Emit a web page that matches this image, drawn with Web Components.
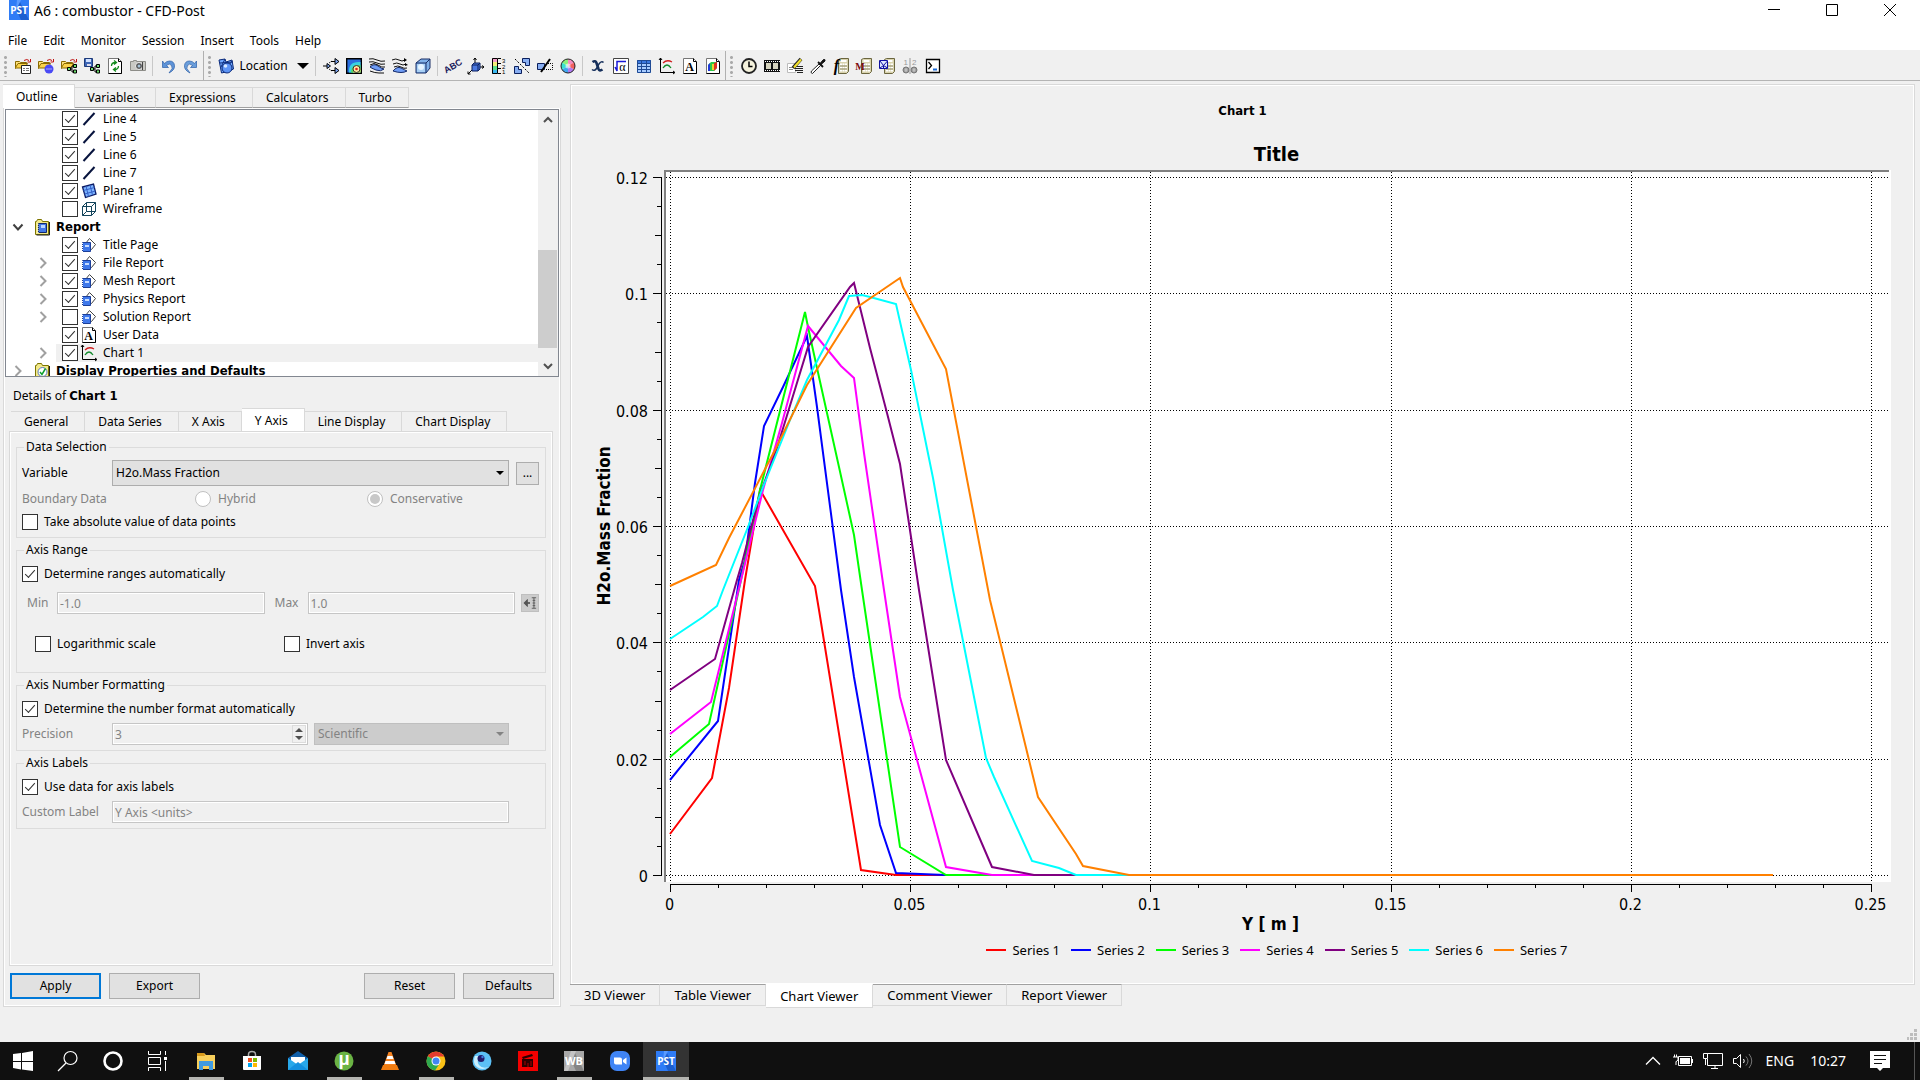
<!DOCTYPE html>
<html lang="en">
<head>
<meta charset="utf-8">
<title>A6 : combustor - CFD-Post</title>
<style>
  html, body { margin: 0; height: 100%; }
  body {
    font: 12px/18px "Noto Sans", "Open Sans", sans-serif;
    color: #000;
    background: #f0f0f0;
    --face: #f0f0f0;
    --line: #dcdcdc;
    --dark-line: #a0a0a0;
    --muted: #838383;
    --strong: 700 13px/18px "DejaVu Sans Condensed", "Noto Sans", sans-serif;
    --title-font: "Noto Sans", "Open Sans", sans-serif;
  }
</style>
</head>
<body>
<cfd-app></cfd-app>

<script>
const folder = `<path d="M.5 3.500h4l1 1h6v2h-8l-3 4z" fill="#ffe27a" stroke="#8a6a00"/><path d="M.5 9.500l2.500-4h9.500l-2.500 4.500h-9.500z" fill="#fbd34b" stroke="#8a6a00"/><path d="M9 2.500q3-2 5 0M15.500 1v3h-3" fill="none" stroke="#c01010"/>`;
const nodes = `<path d="M8 11h3M11 8v6M11 8h1M11 14h1" stroke="#000" fill="none"/><path d="M6.500 9.500h3v3h-3zM12.500 6.500h3v3h-3zM12.500 12h3v3h-3z" fill="#6ee06e" stroke="#000"/>`;
const calc = `<path d="M5.500 1.500l2-1h8v13l-2 2h-8z" fill="#d9d3ae" stroke="#6b663f"/><path d="M7.500 3h6" stroke="#fff" stroke-width="2"/><path d="M7 6.500h7M7 9.500h7M7 12.500h7" stroke="#fff" stroke-width="2" stroke-dasharray="2 .5"/><path d="M7 8h7M7 11h7" stroke="#8b8660"/>`;
const page = `<path d="M1.500 .5h10l3 3v12h-13z" fill="#fff" stroke="#777"/><path d="M11.500 .5v3h3" fill="none" stroke="#000"/><path d="M14.500 4v11.500h-13" fill="none" stroke="#000"/>`;
const axes = `<path d="M1.500 0v14.500h14M0 2l1.500-2 1.500 2M14 13l2 1.500-2 1.500" fill="none" stroke="#000"/>`;

// [viewBox size, markup]
const ICONS = {
  loadResults: [16, folder + `<path d="M6.500 7.500h9v8h-9z" fill="#fff" stroke="#222"/><path d="M8 10.500h2M11 10.500h3M8 12.500h2M11 12.500h3" stroke="#777"/>`],
  loadState: [16, folder + `<circle cx="11" cy="11" r="4.500" fill="#4a4af5"/><path d="M8.500 11h1M10.500 11h1M12.500 11h1" stroke="#fff"/>`],
  saveState: [16, folder + nodes],
  saveAs: [16, `<path d="M.5 .5h8v8h-8z" fill="#3d66b5" stroke="#1c3a7a"/><path d="M2 1h5v3h-5z" fill="#cfe0ff"/><path d="M3 6h4v2h-4z" fill="#dde"/>` + nodes],
  refresh: [16, page + `<path d="M4.500 8q0-3.500 4-3.500M7 2.500l2.500 2-2.500 2M11.500 8q0 3.500-4 3.500M9 9.500l-2.500 2 2.500 2" fill="none" stroke="#128a1c" stroke-width="1.300"/>`],
  camera: [16, `<path d="M.5 3.500h3v-1h3v1h9v9h-15z" fill="#c9c9c4" stroke="#8d8d88"/><circle cx="9" cy="8" r="3.500" fill="#555" stroke="#eee"/><circle cx="9" cy="8" r="1.500" fill="#a9c4d8"/><path d="M12.500 4v8" stroke="#444"/>`],
  undo: [16, `<path d="M2.500 3v6.500h6l-2-2q3-3 5 0t-1.500 6l-1 1.500q6-3 5.500-7.500t-5-4.500q-3 0-5 2.500z" fill="#5d93d8" stroke="#2d5fa8" stroke-width=".7"/>`],
  redo: [16, `<path d="M13.500 3v6.500h-6l2-2q-3-3-5 0t1.500 6l1 1.500q-6-3-5.500-7.500t5-4.500q3 0 5 2.500z" fill="#6a9edb" stroke="#2d5fa8" stroke-width=".7"/>`],
  location: [16, `<path d="M1 2l6-1 1 3 6-2 1.500 9-4 2-8 2z" fill="#6fa8ff" stroke="#0b2a7a"/><path d="M2 5l13-1M3 9l4-8M6 14l8-11" stroke="#0b2a7a"/><circle cx="9" cy="10" r="5" fill="#5c93f5" stroke="#0b2a7a"/><circle cx="7.500" cy="8" r="1.800" fill="#d5e7ff"/>`],
  vector: [16, `<path d="M0 8h4M8 3.500h5M8 12.500h5" stroke="#000"/><path d="M4 5.500l3.500 2.500-3.500 2.500zM12 .5l4 3-4 3zM12 9.500l4 3-4 3z" fill="#7ea6f2" stroke="#000"/><path d="M6 5l3-2M6 11l3 2" stroke="#000" stroke-dasharray="1 1"/>`],
  contour: [16, `<path d="M.7 .7h14.600v14.600h-14.600z" fill="#2a6fe0" stroke="#000" stroke-width="1.400"/><path d="M3 14.500q-1-11.500 11.500-10.500v10.500z" fill="#38d4e0"/><path d="M5 14.500q0-8.500 9.500-7.500v7.500z" fill="#58d858"/><path d="M7 14.500q0-5.500 7.500-4.500v4.500z" fill="#f4e04a"/><circle cx="10.500" cy="11" r="3.500" fill="#ffe9a0" stroke="#333"/><circle cx="10.500" cy="11" r="1.300" fill="#e02020"/>`],
  streamline: [16, `<path d="M1 9q4-4 8-1t6 3q-3 3-8 1t-6-3z" fill="#6f9df5" stroke="#142a6a"/><path d="M0 1q4-1 8 1t8 1M0 4q4-1 8 1t8 1M1 7q4-3 8 0t7 2M1 13q5 2 9 2h5" fill="none" stroke="#111"/>`],
  particle: [16, `<path d="M1 13q4-5 8-3t6 3q-5 3-14 0z" fill="#6f9df5" stroke="#142a6a"/><path d="M0 2q4-2 7 0t6 0M1 6q4-2 7 0t6 0M2 9q4-2 7 0t6 1" fill="none" stroke="#111"/><path d="M12 0l3 2-3 2zM13 5l3 2-3 1z"/>`],
  volume: [16, `<path d="M1 5l5-4h9v9l-4 5h-10z" fill="#7fb0e8" stroke="#1b2f66"/><path d="M1 5h10v10M11 5l4-4" fill="none" stroke="#1b2f66"/><path d="M2 6h8v8h-8z" fill="#a9d0f5"/><circle cx="6" cy="9" r="3" fill="#e6f4ff"/>`],
  abc: [16, `<text x="8" y="11" font-size="9" font-weight="700" font-family="Liberation Sans" text-anchor="middle" fill="#1a1a5c" transform="rotate(-30 8 8)">ABC</text>`],
  coord: [16, `<path d="M7 6v-6M5.500 2l1.500-2 1.500 2M10 9h6M14 7.500l2 1.500-2 1.500M4 12l-4 4M0 13.500v2.500h2.500" fill="none" stroke="#000"/><path d="M4 7l2-2h6v6l-2 2h-6z" fill="#4b78e0" stroke="#0b1f5c"/><path d="M4 7h6v6M10 7l2-2" fill="none" stroke="#0b1f5c"/>`],
  legend: [16, `<path d="M1 0h6v4H1z" fill="#f4a0c8"/><path d="M1 4h6v4H1z" fill="#f4f07a"/><path d="M1 8h6v4H1z" fill="#5ee08a"/><path d="M1 12h6v4H1z" fill="#3ab8f0"/><path d="M1.500 .5h5v15h-5zM7 .5h3M7 5.500h3M7 10.500h3M7 15.500h3" fill="none" stroke="#000"/><text x="11" y="5" font-size="6" font-family="Liberation Sans">3</text><text x="11" y="10.500" font-size="6" font-family="Liberation Sans">2</text><text x="11" y="16" font-size="6" font-family="Liberation Sans">1</text>`],
  instance: [16, `<path d="M8.500 .5h7v7h-4v-3h-3zM.5 8.500h4v3h3v4h-7z" fill="#88aef2" stroke="#0b1f5c"/><path d="M1 1l14 14" stroke="#000" stroke-dasharray="2 1.500"/>`],
  clip: [16, `<path d="M.5 5.500h7v6h-7z" fill="#88aef2" stroke="#0b1f5c"/><path d="M9 5.500h6.500v6h-6.500" fill="none" stroke="#000" stroke-dasharray="1 1"/><path d="M13 1l-9 13" stroke="#000" stroke-width="2"/>`],
  colorWheel: [16, `<path d="M8 8V1a7 7 0 0 1 6 3.500z" fill="#f58ac0"/><path d="M8 8l6-3.500a7 7 0 0 1 0 7z" fill="#f26060"/><path d="M8 8l6 3.500a7 7 0 0 1-6 3.500z" fill="#b07af0"/><path d="M8 8v7a7 7 0 0 1-6-3.500z" fill="#42a8f0"/><path d="M8 8l-6 3.500a7 7 0 0 1 0-7z" fill="#38e0d0"/><path d="M8 8l-6-3.500a7 7 0 0 1 6-3.500z" fill="#8af07a"/><circle cx="8" cy="8" r="2.500" fill="#fff" opacity=".6"/><circle cx="8" cy="8" r="7" fill="none" stroke="#222"/>`],
  variable: [16, `<path d="M2.500 4q3-2 4 1l2 6q1 2.500 4 .5" fill="none" stroke="#16305c" stroke-width="2.600"/><path d="M13.500 4.500q-2-2-4.500 1.500l-2.500 4.500q-2 3-4.500 1" fill="none" stroke="#16305c" stroke-width="1.500"/>`],
  expression: [16, `<path d="M.5 .5h15v15h-15z" fill="#fff" stroke="#444"/><path d="M2 9l2 4V3.500h9" fill="none" stroke="#1818d8" stroke-width="1.500"/><text x="9.500" y="13" font-size="12" font-family="Liberation Serif" text-anchor="middle">α</text>`],
  table: [16, `<path d="M1 2h14v13H1z" fill="#a8ccff"/><path d="M1 2h14v3H1z" fill="#3a78e0"/><path d="M1.500 2.500h13v12h-13zM1 5.500h14M1 8.500h14M1 11.500h14M5.500 2v13M10.500 2v13" fill="none" stroke="#1f4a94"/>`],
  chart: [16, axes + `<path d="M4 5q4-4 9-1" fill="none" stroke="#d02020" stroke-width="1.300"/><path d="M4 10q4-6 8 0" fill="none" stroke="#128a2c" stroke-width="1.300"/>`],
  text: [16, page + `<text x="7.500" y="12.500" font-size="12" font-weight="700" font-family="Liberation Serif" text-anchor="middle">A</text>`],
  figure: [16, page + `<path d="M3 7l3-3h6v6l-3 3h-6z" fill="#30c848"/><path d="M3 7l2-2v8h-2z" fill="#2038d8"/><path d="M9 5l3-1v6l-3 3z" fill="#e03020"/><path d="M7 6h2v6h-2z" fill="#e8d830"/>`],
  clock: [16, `<circle cx="8" cy="8" r="7" fill="#f5f2dc" stroke="#222" stroke-width="1.800"/><path d="M8 3.500v5h3.500" fill="none" stroke="#000" stroke-width="1.500"/>`],
  film: [16, `<path d="M0 2h16v12H0z" fill="#111"/><path d="M2 5h5v6H2zM9 5h5v6H9z" fill="#d5d3bd"/><path d="M1 3.500h15M1 12.500h15" stroke="#fff" stroke-dasharray="1 1"/>`],
  editor: [16, `<path d="M.5 5.500h8v9h-8z" fill="#fff" stroke="#bbb"/><path d="M2 9.500h4M2 11.500h4" stroke="#888"/><path d="M9 8.500h7M8 10.500h8M8 12.500h8M10 14.500h6" stroke="#222"/><path d="M14 1l-8 9" stroke="#222" stroke-width="3.500"/><path d="M14 1.500l-7 8" stroke="#f2e02a" stroke-width="2"/>`],
  probe: [16, `<path d="M9 6l1.500 1.500-8 8-1.500-1 .500-1.500z" fill="#fff" stroke="#222"/><path d="M8 4l5 5" stroke="#111" stroke-width="1.800"/><path d="M10 5.500l3.500-4q2-.5 1.500 1.500l-4 3.500z" fill="#111" stroke="#111"/>`],
  funcCalc: [16, calc + `<text x="3.500" y="13" font-size="16" font-weight="700" font-style="italic" font-family="Liberation Serif" text-anchor="middle">f</text>`],
  macroCalc: [16, calc + `<text x="4" y="11.500" font-size="10" font-weight="700" font-family="Liberation Serif" text-anchor="middle" fill="#7a0c0c">M</text>`],
  meshCalc: [16, calc + `<path d="M.5 2.500h8v8h-8z" fill="#dfe6ff" stroke="#1010a0"/><path d="M1 3l3.500 4.500 4-4.500M1 10l3.500-2.500 4 2.500M4.500 7.500v3" fill="none" stroke="#1010a0"/>`],
  compare: [16, `<g fill="none" stroke="#ccc"><circle cx="4" cy="12" r="3" fill="#999" stroke="#777"/><circle cx="12" cy="12" r="3" fill="#999" stroke="#777"/><path d="M2.500 12h3M10.500 12h3M4 10v4M12 10v4"/><path d="M8 0v16" stroke="#999"/></g><text x="1.500" y="7" font-size="8" font-family="Liberation Sans" fill="#999">1</text><text x="10" y="7" font-size="8" font-family="Liberation Sans" fill="#999">2</text>`],
  console: [16, `<path d="M1.500 1.500h13v13h-13z" fill="#fff" stroke="#000" stroke-width="1.300"/><path d="M3.500 4l3 3.500-3 3.500" fill="none" stroke="#000" stroke-width="1.300"/><path d="M8 11.500h4" stroke="#1a6ad8" stroke-width="2"/>`],

  line: [16, `<path d="M2.500 14L13.500 2" stroke="#07133d" stroke-width="2"/>`],
  plane: [16, `<path d="M1.500 4l11-3 2.500 10-10.500 3.500z" fill="#7db4ff" stroke="#0c1c66" stroke-width="1.300"/><path d="M2.500 7.500l11-3M3.500 11l11-3M5 3l2.500 10.500M9 2l2.500 10" stroke="#3561c8" fill="none"/>`],
  wire: [16, `<path d="M1.500 5.500h9v9h-9zM5.500 1.500h9v9h-9zM1.500 5.500l4-4M10.500 5.500l4-4M1.500 14.500l4-4M10.500 14.500l4-4" fill="none" stroke="#12435a"/>`],
  reportFolder: [16, `<path d="M1.500 2.500h1l1-2h4l1 2h6v13h-13z" fill="#f2e98a" stroke="#7d7400"/><path d="M4.500 4.500h8v9h-8z" fill="#4379e8" stroke="#10286e"/><path d="M7 6h4v3h-4z" fill="#b8d6ff"/><path d="M4 5v9" stroke="#fff" stroke-dasharray="1 1"/><path d="M15.500 3v13h-13" fill="none" stroke="#222"/>`],
  displayFolder: [16, `<path d="M1.500 2.500h1l1-2h4l1 2h6v13h-13z" fill="#f2e98a" stroke="#7d7400"/><circle cx="8.500" cy="9" r="4.500" fill="#fff" stroke="#5a7ac0"/><path d="M6 9l2 2.500 3.500-6" fill="none" stroke="#0ca02c" stroke-width="1.500"/><path d="M15.500 3v13" stroke="#222"/>`],
  report: [16, `<path d="M4.500 6.500l4-5 6 6-4 5z" fill="#fff" stroke="#444"/><path d="M1.500 5.500h8v9h-8z" fill="#3f78ea" stroke="#1c3f98"/><path d="M4 8h4v2H4z" fill="#c6dcff"/><path d="M1.500 6v9" stroke="#fff" stroke-dasharray="1 1"/>`],
  expand: [16, `<path d="M5.500 3l5 5-5 5" fill="none" stroke="#a0a0a0" stroke-width="2"/>`],
  collapse: [16, `<path d="M3.500 5.500l4.500 5 4.500-5" fill="none" stroke="#404040" stroke-width="2"/>`],
  up: [16, `<path d="M4 10l4-4 4 4" fill="none" stroke="#505050" stroke-width="2"/>`],
  down: [16, `<path d="M4 6l4 4 4-4" fill="none" stroke="#505050" stroke-width="2"/>`],
  range: [16, `<path d="M8 8H4" stroke="#555" stroke-width="2"/><path d="M1 8l4-4v8zM10 2h5M10 14h5" fill="#555" stroke="#555"/><path d="M12.500 2v12M11 5h3M11 8h3M11 11h3" stroke="#555"/>`],
  grip: [12, `<path d="M8 1h3v3H8zM4 5h3v3H4zM8 5h3v3H8zM1 9h2v3H1zM4 9h3v3H4zM8 9h3v3H8z" fill="#bdbdbd"/>`],

  pst: [20, `<path d="M0 0h20v20H0z" fill="#2f7cf6"/><path d="M10 0l10 20H12L7 9z" fill="#1c5fd0"/><path d="M8 0l4 0-5 10z" fill="#5b9bff"/><text x="10" y="14" font-size="10" font-weight="700" font-family="Open Sans" text-anchor="middle" fill="#fff">PST</text>`],
  wb: [20, `<path d="M0 0h20v20H0z" fill="#a8a8a8"/><path d="M10 0l10 20H12L7 9z" fill="#858585"/><path d="M7 0h5l-8 20H0z" fill="#c4c4c4"/><text x="10" y="14" font-size="11" font-weight="700" font-family="Open Sans" text-anchor="middle" fill="#fff">WB</text>`],
  minimize: [20, `<path d="M4 9.500h12" stroke="#000"/>`],
  maximize: [20, `<path d="M4.500 4.500h11v11h-11z" fill="none" stroke="#000"/>`],
  close: [20, `<path d="M4 4l12 12M16 4L4 16" stroke="#000" fill="none"/>`],

  windows: [20, `<path d="M0 3l8-1v8H0zM9 2l11-2v10H9zM0 11h8v7.500l-8-1.500zM9 11h11v9L9 18.500z" fill="#fff"/>`],
  search: [20, `<circle cx="12.500" cy="7" r="6.500" fill="none" stroke="#fff" stroke-width="1.200"/><path d="M8 12L0 20" stroke="#fff" stroke-width="1.200"/>`],
  cortana: [20, `<circle cx="10" cy="10" r="8.500" fill="none" stroke="#fff" stroke-width="2.600"/>`],
  taskView: [20, `<path d="M.5 0v3.500h12V0M.5 6.500h12v7h-12zM.5 20v-3.500h12V20M17.500 0v4M17.500 10v10" fill="none" stroke="#fff"/><path d="M16 6h3v3h-3z" fill="#fff"/>`],
  explorer: [20, `<path d="M1 2h7l2 2h9v14H1z" fill="#f7cf5c"/><path d="M1 2h7l1 3H1z" fill="#d89a1c"/><path d="M3 10h14v9h-4v-4H7v4H3z" fill="#3f9ae0"/>`],
  store: [20, `<path d="M6.500 6V3.500q0-3 3.500-3t3.500 3V6" fill="none" stroke="#aaa" stroke-width="1.500"/><path d="M1 5h18v13q0 1-1 1H2q-1 0-1-1z" fill="#fff"/><path d="M6 7h4v4H6z" fill="#f25022"/><path d="M11 7h4v4h-4z" fill="#7fba00"/><path d="M6 12h4v4H6z" fill="#00a4ef"/><path d="M11 12h4v4h-4z" fill="#ffb900"/>`],
  mail: [20, `<path d="M0 7L10 0l10 7v12H0z" fill="#0f5ea8"/><path d="M3 6h14v7H3z" fill="#fff"/><path d="M0 7l10 7 10-7v12H0z" fill="#28a8ea"/><path d="M0 19l10-8 10 8z" fill="#1490df"/>`],
  utorrent: [20, `<circle cx="10" cy="10" r="9.500" fill="#6ab344"/><text x="10" y="14" font-size="17" font-weight="700" font-family="Open Sans" text-anchor="middle" fill="#fff">µ</text>`],
  vlc: [20, `<path d="M8.500 1h3l5 14h-13z" fill="#f58220"/><path d="M7.500 5h5l1 3h-7zM5.500 10h9l1 3h-11z" fill="#fff"/><path d="M3 14h14l2 5H1z" fill="#f07c10"/>`],
  chrome: [20, `<circle cx="10" cy="10" r="9.500" fill="#fbc116"/><path d="M10 10L1.800 5.200A9.500 9.500 0 0 1 18.200 5.500H10z" fill="#e33b2e"/><path d="M10 10L1.800 5.200A9.500 9.500 0 0 0 9 19.500l5-7.500z" fill="#2da94f"/><circle cx="10" cy="10" r="4.500" fill="#fff"/><circle cx="10" cy="10" r="3.500" fill="#4285f4"/>`],
  drop: [20, `<circle cx="10" cy="10" r="9.500" fill="#5cc0f5"/><path d="M3 5q-3 7 2 11t12 0q-7 2-10-2t1-9z" fill="#c8f0ff"/><circle cx="9" cy="7.500" r="3.500" fill="#221a6a"/><circle cx="10.500" cy="6" r="1.200" fill="#3f7ce0"/>`],
  movie: [20, `<path d="M0 0h20v20H0z" fill="#f30000"/><path d="M4 8h11v8H4zM4 6l10-3 1 2-10 3z" fill="#2a0000"/><path d="M7 10v4M10 12v4M13 10v5" stroke="#a00"/>`],
  zoom: [20, `<rect x="0" y="0" width="20" height="20" rx="7" fill="#3f84f5"/><path d="M4 6.500h6q2 0 2 2v5H6q-2 0-2-2zM13 9l3.500-2.500v7L13 11z" fill="#fff"/>`],
  chevronUp: [20, `<path d="M3 13.500l7-7 7 7" fill="none" stroke="#fff" stroke-width="1.300"/>`],
  battery: [20, `<path d="M5.500 5.500h13v9h-13zM19.500 8v4" fill="none" stroke="#fff"/><path d="M7 7h10v6H7z" fill="#fff"/><path d="M0 6h5v3q-1 1.500-2 1.500v3.500M1.500 3.500V6M3.500 3.500V6" fill="#101010" stroke="#fff"/>`],
  network: [20, `<path d="M3.500 2.500h16v12h-15V8M12 15v3M8 17.500h7" fill="none" stroke="#fff"/><path d="M.5 2.500h4v5h-4zM2.500 8v6" fill="#101010" stroke="#fff"/>`],
  sound: [20, `<path d="M.5 7.500h3l4-4v13l-4-4h-3z" fill="none" stroke="#fff"/><path d="M10.500 8q1.500 2 0 4" fill="none" stroke="#fff"/><path d="M13 5.500q4 4.500 0 9M16 3q5.500 7 0 14" fill="none" stroke="#777"/>`],
  action: [20, `<path d="M0 0h20v17h-7l-3 3-3-3H0z" fill="#fff"/><path d="M4 4.500h12M4 8.500h12M4 12.500h8" stroke="#101010"/>`],
};

const define = (name, markup, setup) => {
  const template = document.createElement('template');
  template.innerHTML = markup;
  customElements.define(name, class extends HTMLElement {
    constructor() {
      super();
      this.attachShadow({ mode: 'open' }).appendChild(template.content.cloneNode(true));
    }
    connectedCallback() {
      if (setup) setup(this, this.shadowRoot);
    }
  });
};

define('app-icon', `
  <style>
    :host { display: inline-block; flex: none; width: 16px; height: 16px; }
    svg { display: block; width: 100%; height: 100%; overflow: visible; }
  </style>
  <svg aria-hidden="true"></svg>
`, (el, root) => {
  const [size, markup] = ICONS[el.getAttribute('name')];
  const svg = root.querySelector('svg');
  svg.setAttribute('viewBox', `0 0 ${size} ${size}`);
  svg.innerHTML = markup;
});

define('check-box', `
  <style>
    :host { display: inline-flex; }
    label { display: flex; align-items: center; gap: 6px; }
    input {
      appearance: none; display: grid; place-content: center; box-sizing: border-box;
      flex: none; width: 16px; height: 16px; margin: 0; border: 1px solid #333; background: #fff;
    }
    input:checked::before {
      content: ""; width: 9px; height: 4px; margin-top: -3px;
      border: solid #333; border-width: 0 0 1px 1px; transform: rotate(-48deg);
    }
  </style>
  <label><input type="checkbox"><slot></slot></label>
`, (el, root) => {
  const input = root.querySelector('input');
  input.checked = el.hasAttribute('checked');
  if (el.hasAttribute('label')) input.setAttribute('aria-label', el.getAttribute('label'));
});

define('tab-strip', `
  <style>
    :host { display: flex; align-items: flex-end; height: 24px; }
    button {
      box-sizing: border-box; height: 21px; margin: 0; padding: 0 16px 0 13px; border: 1px solid #d9d9d9;
      border-left-width: 0; border-bottom: 0; background: var(--face); font: inherit; color: inherit; white-space: nowrap;
    }
    button:first-child { border-left-width: 1px; }
    button[aria-selected="true"] { height: 24px; background: #fff; }
    :host([dark]) button:not([aria-selected="true"]) { border-bottom: 1px solid var(--dark-line); }
    :host([bottom]) { align-items: flex-start; height: 23px; font-size: 13px; }
    :host([bottom]) button { height: 22px; padding: 0 14px; border-top: 1px solid var(--dark-line); border-bottom: 1px solid #d9d9d9; }
    :host([bottom]) button[aria-selected="true"] { height: 24px; border-top-color: #fff; }
  </style>
`, (el, root) => {
  el.setAttribute('role', 'tablist');
  const box = document.createDocumentFragment();
  el.getAttribute('tabs').split('|').forEach(name => {
    const button = document.createElement('button');
    button.type = 'button';
    button.setAttribute('role', 'tab');
    button.setAttribute('aria-selected', name === el.getAttribute('selected'));
    button.textContent = name;
    box.appendChild(button);
  });
  root.appendChild(box);
});

define('title-bar', `
  <style>
    :host { display: flex; align-items: center; height: 22px; padding: 0 20px 0 9px; background: #fff; font: 14px/20px var(--title-font); }
    app-icon { width: 20px; height: 20px; }
    .logo { margin: 0 5px 2px 0; }
    .name { flex: 1; }
    button { display: block; margin: 0 0 2px 38px; padding: 0; border: 0; background: none; height: 20px; }
  </style>
  <app-icon class="logo" name="pst"></app-icon>
  <span class="name"><slot></slot></span>
  <button aria-label="Minimize"><app-icon name="minimize"></app-icon></button>
  <button aria-label="Maximize"><app-icon name="maximize"></app-icon></button>
  <button aria-label="Close"><app-icon name="close"></app-icon></button>
`);

define('menu-bar', `
  <style>
    :host { display: flex; gap: 16px; height: 28px; padding: 0 8px; background: #fff; border-bottom: 1px solid #f0f0f0; }
    button { padding: 0; border: 0; background: none; font: inherit; line-height: 38px; height: 38px; color: inherit; }
  </style>
  <button>File</button><button>Edit</button><button>Monitor</button><button>Session</button>
  <button>Insert</button><button>Tools</button><button>Help</button>
`);

define('tool-bar', `
  <style>
    :host { display: flex; align-items: center; height: 29px; padding-left: 4px; border-bottom: 1px solid #b4b4b4; background: var(--face); }
    button { display: flex; align-items: center; justify-content: center; flex: none; width: 23px; height: 23px; padding: 0; border: 0; background: none; font: inherit; color: inherit; }
    .wide { width: 97px; gap: 5px; }
    .arrow { margin-left: 4px; border: 6px solid transparent; border-top-color: #000; border-bottom: 0; }
    i { flex: none; width: 3px; height: 22px; margin: 0 4px; background: radial-gradient(circle, #aaa 1px, transparent 2px) 0 0 / 3px 5px; }
    i:first-of-type { margin-left: 0; }
    s { flex: none; width: 1px; height: 20px; margin: 0 3px; background: #c8c8c8; }
    s.end { height: 29px; margin: 0 0 0 1px; background: #b0b0b0; }
  </style>
`, (el, root) => {
  const groups = [
    '~', 'loadResults', 'loadState', 'saveState', 'saveAs', 'refresh', 'camera', '|', 'undo', 'redo', '||',
    '~', 'location', '|', 'vector', 'contour', 'streamline', 'particle', 'volume',
    '|', 'abc', 'coord', 'legend', 'instance', 'clip', 'colorWheel',
    '|', 'variable', 'expression', 'table', 'chart', 'text', 'figure', '||',
    '~', 'clock', 'film', 'editor', 'probe', 'funcCalc', 'macroCalc', 'meshCalc', 'compare', 'console',
  ];
  const html = groups.map(item => {
    if (item === '~') return '<i></i>';
    if (item === '|') return '<s></s>';
    if (item === '||') return '<s class="end"></s>';
    if (item === 'location') return '<button class="wide"><app-icon name="location"></app-icon>Location<span class="arrow"></span></button>';
    return `<button aria-label="${item}"><app-icon name="${item}"></app-icon></button>`;
  });
  root.querySelector('style').insertAdjacentHTML('afterend', html.join(''));
});

define('outline-tree', `
  <style>
    :host { display: flex; box-sizing: border-box; height: 268px; border: 1px solid #828790; background: #fff; }
    ul { flex: 1; margin: 0; padding: 0; overflow: hidden; list-style: none; }
    li { display: flex; align-items: center; height: 18px; padding-left: 29px; }
    .arrow { width: 16px; height: 16px; flex: none; margin-right: 5px; }
    .body { display: flex; flex: 1; align-items: center; height: 18px; padding-left: 6px; }
    .body > span { margin-left: 6px; }
    check-box { margin-right: 3px; }
    .group { padding-left: 4px; font: var(--strong); }
    .group .body { padding-left: 3px; }
    .selected .body { background: #f0f0f0; }
    .bar { display: flex; flex-direction: column; align-items: center; width: 20px; background: #f0f0f0; }
    .track { display: flex; flex: 1; flex-direction: column; align-self: stretch; }
    .track::before { content: ""; flex: 120; }
    .track::after { content: ""; flex: 8; }
    .thumb { flex: 98; margin: 0 1px 0 0; background: #cdcdcd; }
    .bar app-icon { margin: 2px 0; }
  </style>
  <ul></ul>
  <div class="bar"><app-icon name="up"></app-icon><div class="track"><div class="thumb"></div></div><app-icon name="down"></app-icon></div>
`, (el, root) => {
  // name, icon, checked (null for a group), arrow
  const rows = [
    ['Line 4', 'line', true], ['Line 5', 'line', true], ['Line 6', 'line', true], ['Line 7', 'line', true],
    ['Plane 1', 'plane', true], ['Wireframe', 'wire', false],
    ['Report', 'reportFolder', null, 'collapse'],
    ['Title Page', 'report', true], ['File Report', 'report', true, 'expand'], ['Mesh Report', 'report', true, 'expand'],
    ['Physics Report', 'report', true, 'expand'], ['Solution Report', 'report', false, 'expand'],
    ['User Data', 'text', true], ['Chart 1', 'chart', true, 'expand'],
    ['Display Properties and Defaults', 'displayFolder', null, 'expand'],
  ];
  root.querySelector('ul').innerHTML = rows.map(([name, icon, checked, arrow]) => `
    <li class="${checked === null ? 'group' : ''} ${name === 'Chart 1' ? 'selected' : ''}">
      <span class="arrow">${arrow ? `<app-icon name="${arrow}"></app-icon>` : ''}</span>
      <span class="body">${checked === null ? '' : `<check-box label="${name}" ${checked ? 'checked' : ''}></check-box>`}<app-icon name="${icon}"></app-icon><span>${name}</span></span>
    </li>`).join('');
});

define('group-box', `
  <style>
    :host { display: block; }
    fieldset { display: grid; gap: 3px; min-width: 0; margin: 0; padding: 4px 6px 5px 5px; border: 1px solid var(--line); }
    legend { margin-left: 2px; padding: 0 2px; }
  </style>
  <fieldset><legend></legend><slot></slot></fieldset>
`, (el, root) => {
  root.querySelector('legend').textContent = el.getAttribute('label');
});

define('axis-form', `
  <style>
    :host { display: grid; align-content: start; gap: 3px; padding: 6px; border: 1px solid #d9d9d9; box-shadow: inset 0 0 0 1px #fff; }
    .row { display: flex; align-items: center; height: 22px; }
    .low { height: 20px; }
    .tall { height: 26px; }
    .row > label:first-child, .row > .label { width: 90px; flex: none; }
    .off { color: var(--muted); }
    .field { display: grid; flex: 1; align-items: center; }
    .field > * { grid-area: 1 / 1; }
    .field::after { content: ""; grid-area: 1 / 1; justify-self: end; margin-right: 5px; border: 4px solid transparent; border-top-color: currentColor; border-bottom: 0; pointer-events: none; }
    select, input[type="text"], input[type="number"] { box-sizing: border-box; width: 100%; min-width: 0; height: 22px; margin: 0; font: inherit; color: inherit; opacity: 1; border: 1px solid #c6c6c6; border-radius: 0; }
    select { appearance: none; height: 26px; padding: 0 3px; background: #e1e1e1; border-color: #adadad; }
    .off select { height: 22px; background: #ccc; border-color: #bfbfbf; }
    input[type="text"], input[type="number"] { padding: 0 2px; background: var(--face); box-shadow: inset 0 0 0 1px #fff; appearance: textfield; }
    .spin { flex: none; width: 196px; margin-right: 6px; }
    .spin::after { display: none; }
    .spin .steps { justify-self: end; display: grid; gap: 4px; width: 12px; height: 16px; margin-right: 2px; border: 1px solid #dcdcdc; place-content: center; }
    .steps::before, .steps::after { content: ""; border: 4px solid transparent; border-top: 0; border-bottom-color: #505050; }
    .steps::after { border: 4px solid transparent; border-bottom: 0; border-top-color: #505050; }
    .row > .narrow { margin-right: 30px; }
    button { box-sizing: border-box; width: 23px; height: 23px; margin-left: 7px; padding: 0; border: 1px solid #adadad; background: #e1e1e1; font: inherit; }
    .small { display: grid; place-content: center; width: 18px; height: 18px; margin-left: 6px; border-color: #bfbfbf; background: #ccc; }
    .small app-icon { width: 14px; height: 14px; }
    .radio { display: flex; flex: 1; align-items: center; gap: 7px; }
    input[type="radio"] { appearance: none; display: grid; place-content: center; box-sizing: border-box; width: 16px; height: 16px; margin: 0; border: 1px solid #c0c0c0; border-radius: 50%; background: #fff; }
    input[type="radio"]:checked::before { content: ""; width: 10px; height: 10px; border-radius: 50%; background: #c8c8c8; }
    .range { margin: 4px 0; padding-left: 5px; }
    .range > label:first-child { width: 30px; }
    .range > .max { width: 33px; margin-left: 10px; }
    .range > input { flex: 1; }
    .pair { display: grid; grid-template-columns: 1fr 1fr; align-items: center; height: 46px; padding: 0 6px 0 13px; }
    .radios { display: flex; flex: 1; padding: 0 0 0 83px; }
  </style>
  <group-box label="Data Selection">
    <div class="row tall">
      <label for="variable">Variable</label>
      <div class="field"><select id="variable"><option>H2o.Mass Fraction</option></select></div>
      <button type="button">...</button>
    </div>
    <div class="row low off">
      <span class="label">Boundary Data</span>
      <div class="radios">
        <label class="radio"><input type="radio" name="boundary" disabled>Hybrid</label>
        <label class="radio"><input type="radio" name="boundary" checked disabled>Conservative</label>
      </div>
    </div>
    <div class="row low"><check-box>Take absolute value of data points</check-box></div>
  </group-box>
  <group-box label="Axis Range">
    <div class="row"><check-box checked>Determine ranges automatically</check-box></div>
    <div class="row off range">
      <label for="min">Min</label><input type="text" id="min" value="-1.0" disabled>
      <label for="max" class="max">Max</label><input type="text" id="max" value="1.0" disabled>
      <button type="button" class="small" aria-label="Calculate range" disabled><app-icon name="range"></app-icon></button>
    </div>
    <div class="pair"><check-box>Logarithmic scale</check-box><check-box>Invert axis</check-box></div>
  </group-box>
  <group-box label="Axis Number Formatting">
    <div class="row"><check-box checked>Determine the number format automatically</check-box></div>
    <div class="row off">
      <label for="precision">Precision</label>
      <div class="field spin"><input type="number" id="precision" value="3" disabled><span class="steps"></span></div>
      <div class="field narrow"><select aria-label="Number format" disabled><option>Scientific</option></select></div>
    </div>
  </group-box>
  <group-box label="Axis Labels">
    <div class="row"><check-box checked>Use data for axis labels</check-box></div>
    <div class="row off">
      <label for="custom">Custom Label</label>
      <input type="text" id="custom" class="narrow" value="Y Axis &lt;units&gt;" disabled>
    </div>
  </group-box>
`);

define('outline-dock', `
  <style>
    :host { display: flex; flex-direction: column; padding: 3px 0 0 3px; }
    .frame { display: flex; flex: 1; flex-direction: column; padding: 1px 1px 0; border: 1px solid #d9d9d9; box-shadow: inset 0 0 0 1px #fff; border-top: 0; }
    .details { margin: 10px 8px 3px; }
    .details b { font: var(--strong); }
    .tabs { padding-left: 6px; }
    axis-form { flex: 1; margin: -1px 6px 7px 4px; }
    .actions { display: flex; gap: 8px; padding: 0 5px 7px; }
    .actions button { box-sizing: border-box; width: 91px; height: 26px; padding: 0; border: 1px solid #adadad; background: #e1e1e1; font: inherit; color: inherit; }
    .actions .default { border: 2px solid #0078d7; }
    .actions .push { margin-left: auto; }
  </style>
  <tab-strip dark tabs="Outline|Variables|Expressions|Calculators|Turbo" selected="Outline"></tab-strip>
  <div class="frame">
    <outline-tree></outline-tree>
    <div class="details">Details of <b>Chart 1</b></div>
    <tab-strip class="tabs" tabs="General|Data Series|X Axis|Y Axis|Line Display|Chart Display" selected="Y Axis"></tab-strip>
    <axis-form></axis-form>
    <div class="actions">
      <button class="default">Apply</button><button>Export</button>
      <button class="push">Reset</button><button>Defaults</button>
    </div>
  </div>
`);

// Points are in plot units: 4804 per metre across, 5817 per unit of mass fraction up.
const SERIES = [
  ['Series 1', '#ff0000', '0,41 42,97 59,187 75,295 90,385 93,380 145,289 149,265 191,5 226,0 275,0'],
  ['Series 2', '#0000ff', '0,95 48,154 69,295 75,315 85,392 94,449 113,488 137,539 147,468 171,285 184,198 210,50 226,2 275,0 320,0'],
  ['Series 3', '#00ff00', '0,118 39,151 71,295 90,385 135,563 138,548 147,507 169,408 184,340 192,285 230,28 276,0 366,0'],
  ['Series 4', '#ff00ff', '0,141 41,173 71,295 93,385 112,452 138,549 171,509 184,497 194,422 214,285 230,178 276,8 322,0 405,0'],
  ['Series 5', '#800080', '0,185 16,196 45,216 67,295 72,312 89,378 107,427 138,528 180,588 184,592 200,527 217,462 230,411 249,285 276,115 322,8 364,0 406,0'],
  ['Series 6', '#00ffff', '0,236 33,258 47,269 53,285 78,348 93,388 120,455 137,495 169,555 179,579 192,580 200,578 226,571 241,505 263,397 283,285 316,117 324,98 362,14 389,7 406,0 460,0'],
  ['Series 7', '#ff8000', '0,289 46,310 59,337 104,423 137,490 186,567 230,597 233,588 276,506 320,275 368,78 406,21 413,9 459,0 1103,0'],
];

define('line-chart', `
  <style>
    :host { display: flex; flex-direction: column; min-width: 0; }
    .plot { flex: 1; min-height: 0; overflow: hidden; }
    svg { display: block; font-family: "DejaVu Sans Condensed", "Noto Sans", sans-serif; }
    .tick { font-size: 16px; }
    .axis { font-size: 17px; font-weight: 700; }
    .title { font-size: 20px; font-weight: 700; }
    ul { display: flex; justify-content: center; gap: 11px; margin: 0; padding: 2px 24px 25px 93px; list-style: none; font-size: 13px; }
    li { display: flex; align-items: center; gap: 6px; }
    li::before { content: ""; width: 20px; height: 2px; background: var(--series); }
  </style>
  <div class="plot"></div>
  <ul></ul>
`, (el, root) => {
  const plot = root.querySelector('.plot');
  root.querySelector('ul').innerHTML = SERIES.map(([name, color]) => `<li style="--series: ${color}">${name}</li>`).join('');

  const draw = () => {
    const width = plot.clientWidth;
    const height = plot.clientHeight;
    const left = 99, right = width - 43, top = 46, bottom = height - 64;
    const px = v => Math.round(left + v / 0.25 * (right - left)) + 0.5;
    const py = v => Math.round(bottom - v / 0.12 * (bottom - top)) + 0.5;
    let out = `<rect x="${left - 6}" y="${top - 7}" width="${right - left + 26}" height="${bottom - top + 14}" fill="#fff"/>
      <path d="M${left - 5} ${bottom + 7}V${top - 6}H${right + 18}" fill="none" stroke="#808080" stroke-width="2"/>`;
    let grid = '', ticks = '';
    for (let i = 0; i <= 25; i++) {
      const x = px(i / 100);
      const major = i % 5 === 0;
      ticks += `M${x} ${bottom + 9}v${major ? 8 : 4}`;
      if (major) {
        grid += `M${x} ${top - 5}V${bottom + 6}`;
        out += `<text class="tick" x="${x - 1}" y="${bottom + 35}" text-anchor="middle">${i / 100}</text>`;
      }
    }
    for (let i = 0; i <= 24; i++) {
      const y = py(i * 0.005);
      const major = i % 4 === 0;
      ticks += `M${left - 9} ${y}h${major ? -8 : i % 2 ? -4 : -6}`;
      if (major) {
        grid += `M${left - 4} ${y}H${right + 18}`;
        out += `<text class="tick" x="${left - 22}" y="${y + 6}" text-anchor="end">${i * 5 / 1000}</text>`;
      }
    }
    out += `<path d="${grid}" stroke="#000" stroke-dasharray="1 2"/>
      <path d="${ticks}M${left - 8.5} ${top}V${bottom + 1}M${left} ${bottom + 9.5}H${right + 1}" stroke="#000" fill="none"/>`;
    SERIES.forEach(([, color, points]) => {
      const list = points.split(' ').map(p => {
        const [x, y] = p.split(',');
        return `${left + x / 1201 * (right - left)},${bottom - y / 698 * (bottom - top)}`;
      });
      out += `<polyline points="${list.join(' ')}" fill="none" stroke="${color}" stroke-width="2"/>`;
    });
    const middle = (left + right) / 2;
    out += `<text class="title" x="${middle + 6}" y="30" text-anchor="middle">Title</text>
      <text class="axis" x="${middle}" y="${bottom + 55}" text-anchor="middle">Y [ m ]</text>
      <text class="axis" transform="translate(39 ${(top + bottom) / 2}) rotate(-90)" text-anchor="middle">H2o.Mass Fraction</text>`;
    plot.innerHTML = `<svg width="${width}" height="${height}" role="img">${out}</svg>`;
  };
  draw();
  new ResizeObserver(draw).observe(plot);
});

define('chart-view', `
  <style>
    :host { display: flex; flex-direction: column; min-width: 0; min-height: 0; padding: 3px 5px 0 9px; }
    .frame { display: flex; flex: 1; flex-direction: column; min-height: 0; border: 1px solid #d9d9d9; box-shadow: inset 0 0 0 1px #fff; }
    h1 { margin: 0; padding: 17px 0 11px; font: var(--strong); text-align: center; }
    line-chart { flex: 1; min-height: 0; }
    tab-strip { flex: none; margin: -1px 0 0; }
  </style>
  <div class="frame">
    <h1>Chart 1</h1>
    <line-chart></line-chart>
  </div>
  <tab-strip bottom tabs="3D Viewer|Table Viewer|Chart Viewer|Comment Viewer|Report Viewer" selected="Chart Viewer"></tab-strip>
`);

define('task-bar', `
  <style>
    :host { display: flex; height: 38px; background: #101010; color: #fff; font: 14px/20px var(--title-font); }
    app-icon { width: 20px; height: 20px; }
    button { display: grid; place-content: center; box-sizing: border-box; width: 45px; padding: 0; border: 0; background: none; }
    .apps { display: flex; margin-left: 3px; }
    .apps button { width: 46px; }
    .apps .open { background: linear-gradient(#b4b4b0, #b4b4b0) bottom / 35px 3px no-repeat; }
    .apps .active { background: linear-gradient(#b4b4b0, #b4b4b0) bottom / 100% 3px no-repeat #333; }
    .tray { display: flex; align-items: center; gap: 10px; margin-left: auto; padding-right: 5px; }
    .tray time { margin: 0 14px 0 6px; }
    .tray span { margin-left: 3px; }
    .tray .edge { width: 1px; height: 38px; margin-left: 14px; background: #555; }
  </style>
  <button aria-label="Start"><app-icon name="windows"></app-icon></button>
  <button aria-label="Search"><app-icon name="search"></app-icon></button>
  <button aria-label="Cortana"><app-icon name="cortana"></app-icon></button>
  <button aria-label="Task view"><app-icon name="taskView"></app-icon></button>
  <div class="apps">
    <button class="open" aria-label="Files"><app-icon name="explorer"></app-icon></button>
    <button aria-label="Store"><app-icon name="store"></app-icon></button>
    <button aria-label="Mail"><app-icon name="mail"></app-icon></button>
    <button class="open" aria-label="Torrents"><app-icon name="utorrent"></app-icon></button>
    <button aria-label="Player"><app-icon name="vlc"></app-icon></button>
    <button class="open" aria-label="Browser"><app-icon name="chrome"></app-icon></button>
    <button aria-label="Drop"><app-icon name="drop"></app-icon></button>
    <button aria-label="Movies"><app-icon name="movie"></app-icon></button>
    <button class="open" aria-label="Workbench"><app-icon name="wb"></app-icon></button>
    <button aria-label="Meetings"><app-icon name="zoom"></app-icon></button>
    <button class="active" aria-label="CFD-Post"><app-icon name="pst"></app-icon></button>
  </div>
  <div class="tray">
    <app-icon name="chevronUp"></app-icon><app-icon name="battery"></app-icon>
    <app-icon name="network"></app-icon><app-icon name="sound"></app-icon>
    <span>ENG</span><time>10:27</time><app-icon name="action"></app-icon><span class="edge"></span>
  </div>
`);

define('cfd-app', `
  <style>
    :host { display: flex; flex-direction: column; height: 100vh; min-height: 1000px; }
    main { display: grid; flex: 1; grid-template: minmax(0, 1fr) / 561px 1fr; min-height: 0; }
    footer { display: flex; flex: none; justify-content: flex-end; align-items: flex-end; height: 35px; }
    .grip { width: 12px; height: 12px; margin: 0 2px 2px; }
  </style>
  <title-bar>A6 : combustor - CFD-Post</title-bar>
  <menu-bar></menu-bar>
  <tool-bar></tool-bar>
  <main>
    <outline-dock></outline-dock>
    <chart-view></chart-view>
  </main>
  <footer><app-icon class="grip" name="grip"></app-icon></footer>
  <task-bar></task-bar>
`);
</script>
</body>
</html>
